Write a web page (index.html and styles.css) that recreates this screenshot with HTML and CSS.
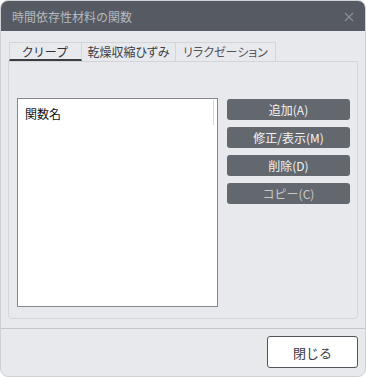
FILE: index.html
```html
<!DOCTYPE html>
<html lang="ja">
<head>
    <meta charset="UTF-8">
    <title>時間依存性材料の関数</title>
    <link rel="stylesheet" href="styles.css">
</head>
<body>
    <div class="dialog">
        <!-- タイトルバー -->
        <div class="titlebar">
            <span class="title">時間依存性材料の関数</span>
            <svg class="close-x" width="10" height="10" viewBox="0 0 10 10">
                <path d="M1 1 L9 9 M9 1 L1 9" stroke="#8b9097" stroke-width="1.1" fill="none" />
            </svg>
        </div>

        <div class="content">
            <!-- タブ -->
            <div class="tabs">
                <div class="tab active">クリープ</div>
                <div class="tab">乾燥収縮ひずみ</div>
                <div class="tab">リラクゼーション</div>
            </div>

            <div class="panel">
                <div class="listbox">
                    <div class="list-header">関数名</div>
                    <div class="list-scroll"></div>
                </div>
                <div class="actions">
                    <button class="btn">追加(A)</button>
                    <button class="btn">修正/表示(M)</button>
                    <button class="btn">削除(D)</button>
                    <button class="btn disabled">コピー(C)</button>
                </div>
            </div>
        </div>

        <div class="footer">
            <button class="btn-close">閉じる</button>
        </div>
    </div>
</body>
</html>
```

FILE: styles.css
```css
/* 基本 */
body {
    margin: 0;
    background: #ffffff;
    font-family: "Noto Sans CJK JP", "Noto Sans", "Liberation Sans", sans-serif;
    font-size: 12px;
    color: #2b2d31;
}

/* ダイアログ */
.dialog {
    width: 366px;
    height: 377px;
    box-sizing: border-box;
    background-color: #e8e9ed;
    border: 1px solid #cfd1d5;
    border-radius: 8px;
    overflow: hidden;
    display: flex;
    flex-direction: column;
}

/* タイトルバー */
.titlebar {
    height: 30px;
    flex: none;
    background-color: #565b63;
    display: flex;
    align-items: center;
    justify-content: space-between;
    padding: 0 11px 0 11px;
}

.title {
    color: #b5b9be;
    font-size: 12px;
}

.close-x {
    display: block;
    margin-top: 1px;
}

/* 内容 */
.content {
    padding: 11px 7px 0 7px;
}

.tabs {
    display: flex;
    padding-left: 1px;
}

.tab {
    height: 19px;
    box-sizing: border-box;
    border: 1px solid #d3d5da;
    border-bottom: none;
    line-height: 17px;
    padding: 0;
    color: #3d4045;
    text-align: center;
    white-space: nowrap;
    font-feature-settings: "palt";
}

.tab + .tab {
    border-left: none;
}

.tab.active {
    width: 73px;
    border-bottom: 2px solid #3b3e43;
    color: #303236;
    letter-spacing: 1px;
}

.tab:nth-child(2) {
    width: 94px;
}

.tab:nth-child(3) {
    width: 100px;
    color: #50545a;
}

/* タブパネル */
.panel {
    height: 258px;
    box-sizing: border-box;
    border: 1px solid #d3d5da;
    border-radius: 0 0 4px 4px;
    display: flex;
    align-items: flex-start;
    padding: 36px 7px 0 8px;
    gap: 9px;
}

/* リスト */
.listbox {
    width: 201px;
    height: 209px;
    box-sizing: border-box;
    background: #ffffff;
    border: 1px solid #85898f;
    display: flex;
    justify-content: space-between;
    align-items: flex-start;
}

.list-header {
    padding: 6px 0 0 7px;
    color: #111;
    font-size: 12px;
}

.list-scroll {
    width: 1px;
    height: 25px;
    margin: 1px 3px 0 0;
    background: #d6d7da;
}

/* ボタン */
.actions {
    display: flex;
    flex-direction: column;
    gap: 7px;
    padding-top: 1px;
}

.btn {
    width: 123px;
    height: 21px;
    border: none;
    border-radius: 3px;
    background-color: #63676e;
    color: #f2f3f5;
    font-family: inherit;
    font-size: 12px;
    padding: 0;
    line-height: 21px;
}

.btn.disabled {
    color: #c8cacd;
}

/* フッター */
.footer {
    margin-top: 9px;
    border-top: 1px solid #c3c5ca;
    display: flex;
    justify-content: flex-end;
    padding: 7px 7px 0 0;
}

.btn-close {
    width: 91px;
    height: 32px;
    box-sizing: border-box;
    background: #ffffff;
    border: 1px solid #50545a;
    border-radius: 3px;
    font-family: inherit;
    font-size: 13px;
    color: #3a3c40;
    padding: 0;
}
```
